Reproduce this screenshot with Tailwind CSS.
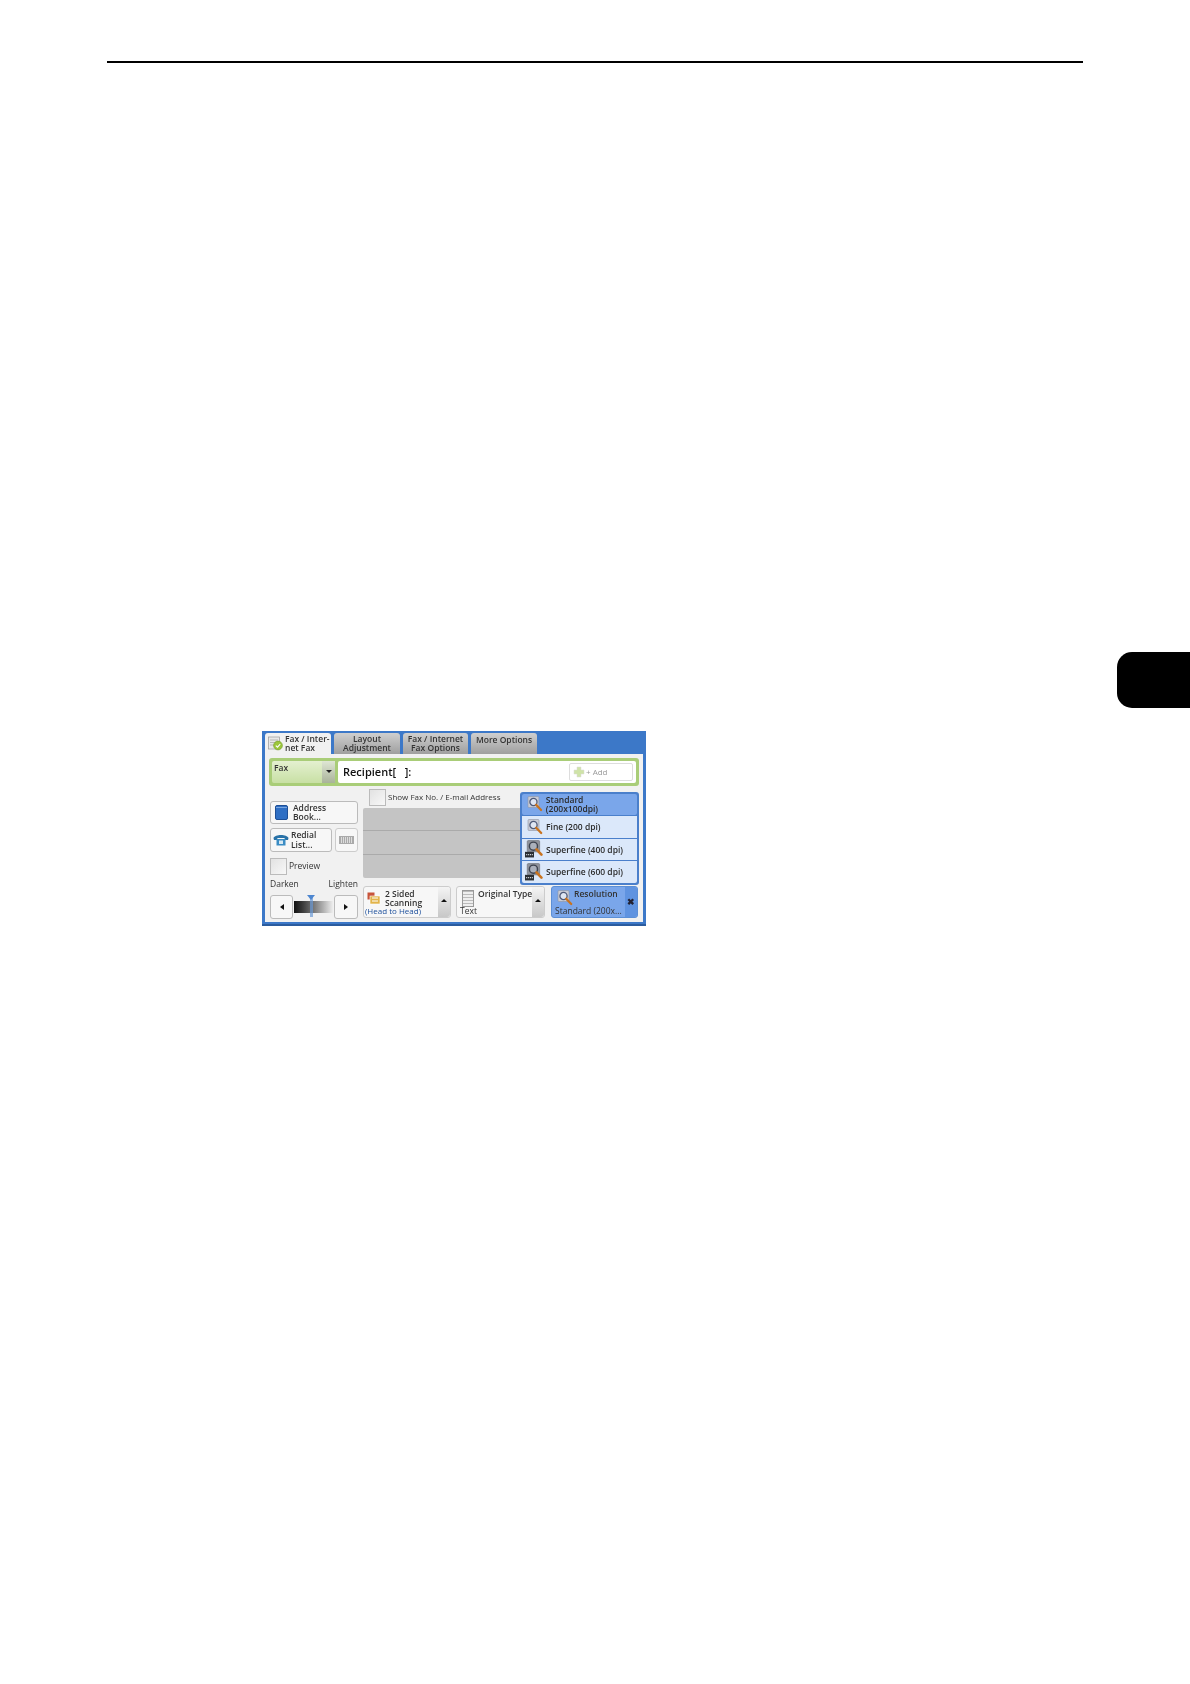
<!DOCTYPE html>
<html lang="en">
<head>
  <meta charset="UTF-8" />
  <title>Fax / Internet Fax</title>
  <script src="https://cdn.jsdelivr.net/npm/@tailwindcss/browser@4"></script>
</head>
<body class="bg-white h-[1684px] relative overflow-hidden font-['Open_Sans',sans-serif]">
  <svg class="hidden">
    <symbol id="lens" viewBox="0 0 16 16">
      <rect x="1" y="0.5" width="11" height="11" rx="1" fill="#c9ccd6" stroke="#8d93a3" stroke-width="0.6" />
      <circle cx="6.5" cy="6" r="3.6" fill="#dfe6f2" stroke="#4f5a78" stroke-width="1.3" />
      <path d="M9.2 8.8 L14.2 14" stroke="#c9731f" stroke-width="2.3" stroke-linecap="round" />
    </symbol>
    <symbol id="lensDark" viewBox="0 0 16 16">
      <rect x="2" y="0.5" width="11" height="10" rx="1" fill="#8f939c" stroke="#6d717a" stroke-width="0.6" />
      <circle cx="7.5" cy="5.5" r="3.6" fill="#aab0bb" stroke="#3e4450" stroke-width="1.3" />
      <path d="M10.2 8.3 L14.6 13" stroke="#c9731f" stroke-width="2.3" stroke-linecap="round" />
      <rect x="0" y="10.5" width="8" height="5" fill="#2b2f33" />
      <path d="M1 13h6" stroke="#cfd2d6" stroke-width="1" stroke-dasharray="1 .7" />
    </symbol>
  </svg>

  <div class="mt-[61px] mx-[107px] h-[1.5px] bg-black"></div>

  <!-- chapter tab -->
  <div class="absolute left-[1117px] top-[652px] w-[73px] h-[56px] bg-black rounded-l-[15px]"></div>

  <div class="mt-[668px] ml-[262px] w-[384px] h-[195px] bg-[#3c78c8] border-b-2 border-[#2b5c9e] pt-[2px] px-[3px] blur-[0.35px] text-[#333] leading-[9.5px]">
    <!-- tabs -->
    <div class="flex h-[21px] gap-[3px] text-[8.5px] font-semibold">
      <div class="w-[66px] bg-[#f1f1f1] rounded-t-[3px] flex items-center gap-[2px] pl-[3px]">
        <svg class="w-[15px] h-[15px] shrink-0" viewBox="0 0 15 15">
          <rect x="0.5" y="1" width="11" height="12" fill="#e8e8e8" stroke="#999" stroke-width="0.7" />
          <path d="M2 4h8M2 6.5h6M2 9h5" stroke="#aaa" stroke-width="0.8" />
          <circle cx="10" cy="9.5" r="4.4" fill="#9cc63b" stroke="#6f9a22" stroke-width="0.6" />
          <path d="M7.8 9.6l1.7 1.6 2.7-3" fill="none" stroke="#fff" stroke-width="1.1" />
        </svg>
        <div>Fax / Inter-<br />net Fax</div>
      </div>
      <div class="w-[66px] bg-gradient-to-b from-[#cfcfcf] to-[#9f9f9f] rounded-t-[3px] flex items-center justify-center text-center">Layout<br />Adjustment</div>
      <div class="w-[65px] bg-gradient-to-b from-[#cfcfcf] to-[#9f9f9f] rounded-t-[3px] flex items-center justify-center text-center">Fax / Internet<br />Fax Options</div>
      <div class="w-[66px] bg-gradient-to-b from-[#cfcfcf] to-[#9f9f9f] rounded-t-[3px] text-center pt-[2px]">More Options</div>
    </div>

    <!-- body -->
    <div class="relative w-[378px] h-[168px] bg-[#f1f1f1] pt-[4px]">
      <div class="mx-[4px] h-[28px] bg-[#a9cd78] rounded-[3px] p-[3px] flex">
        <div class="w-[50px] bg-gradient-to-b from-[#e4f0d0] to-[#c8e0a4] rounded-l-[2px] pl-[2px] pt-[2px] text-[8.5px] font-semibold">Fax</div>
        <div class="w-[13px] bg-gradient-to-b from-[#dfe6d4] to-[#a9b39a] flex items-center justify-center">
          <div class="w-0 h-0 border-x-[3px] border-x-transparent border-t-[3px] border-t-[#222]"></div>
        </div>
        <div class="ml-[3px] flex-1 bg-white rounded-[2px] flex items-center justify-between pl-[5px] pr-[3px]">
          <span class="text-[11px] font-semibold text-[#111]">Recipient[&nbsp;&nbsp;&nbsp;]:</span>
          <div class="w-[64px] h-[18px] border border-[#ddd] rounded-[2px] flex items-center pl-[3px] gap-[1px] text-[8px] text-[#999]">
            <svg class="w-[12px] h-[12px]" viewBox="0 0 12 12"><path d="M4 1h4v3h3v4H8v3H4V8H1V4h3z" fill="#cfe3a8" stroke="#dbdbdb" stroke-width="0.5" /></svg>
            + Add
          </div>
        </div>
      </div>

      <div class="flex">
        <!-- left column -->
        <div class="w-[88px] ml-[5px] pt-[15px] flex flex-col shrink-0 text-[8.5px] font-semibold">
          <div class="h-[23px] border border-[#bbb] rounded-[3px] bg-[#f7f7f7] flex items-center pl-[4px] gap-[5px]">
            <svg class="w-[13px] h-[15px] shrink-0" viewBox="0 0 13 15"><rect x="0.5" y="0.5" width="12" height="14" rx="1.5" fill="#2f6fc4" stroke="#1e4f96" /><path d="M1 2.5h11" stroke="#7ba6e0" /></svg>
            <div>Address<br />Book...</div>
          </div>
          <div class="mt-[4px] flex gap-[3px] h-[24px]">
            <div class="w-[62px] border border-[#bbb] rounded-[3px] bg-[#f7f7f7] flex items-center pl-[2px] gap-[2px]">
              <svg class="w-[16px] h-[13px] shrink-0" viewBox="0 0 16 13"><path d="M0.5 5C2 1 14 1 15.5 5l-.5 2h-3l-.5-2h-7L4 7H1z" fill="#2a73a8" /><rect x="3.5" y="6" width="9" height="6.5" fill="#3a8cc4" /><rect x="6" y="7.5" width="4" height="3.5" fill="#d7e8f2" /></svg>
              <div>Redial<br />List...</div>
            </div>
            <div class="w-[23px] border border-[#ccc] rounded-[3px] bg-[#f7f7f7] flex items-center justify-center">
              <div class="w-[15px] h-[8px] bg-[repeating-linear-gradient(90deg,#aaa_0,#aaa_1px,#ddd_1px,#ddd_2px)] border border-[#aaa]"></div>
            </div>
          </div>
          <div class="mt-[6px] h-[17px] flex items-center gap-[2px] font-normal">
            <div class="w-[17px] h-[17px] border border-[#bbb] bg-gradient-to-br from-[#e2e2e2] to-[#f8f8f8]"></div>
            <span>Preview</span>
          </div>
          <div class="mt-[4px] h-[15px] flex justify-between font-normal"><span>Darken</span><span>Lighten</span></div>
          <div class="mt-[1px] flex h-[24px] items-stretch">
            <div class="w-[23px] border border-[#bbb] rounded-[3px] bg-[#f7f7f7] flex items-center justify-center">
              <div class="w-0 h-0 border-y-[3px] border-y-transparent border-r-[4px] border-r-[#111]"></div>
            </div>
            <div class="flex-1 relative flex items-center pl-[1px]">
              <div class="w-[39px] h-[12px] bg-gradient-to-r from-[#111] via-[#777] to-[#eee]"></div>
              <div class="absolute left-[17px] top-[2px] w-[3px] h-[20px] bg-[#6b9ad6]/70"></div>
              <div class="absolute left-[14px] top-[0px] w-0 h-0 border-x-[4px] border-x-transparent border-t-[5px] border-t-[#4d86d0]"></div>
            </div>
            <div class="w-[24px] border border-[#bbb] rounded-[3px] bg-[#f7f7f7] flex items-center justify-center">
              <div class="w-0 h-0 border-y-[3px] border-y-transparent border-l-[4px] border-l-[#111]"></div>
            </div>
          </div>
        </div>

        <!-- middle column -->
        <div class="ml-[5px] w-[276px]">
          <div class="mt-[3px] ml-[6px] h-[17px] flex items-center gap-[2px] text-[8px]">
            <div class="w-[17px] h-[17px] border border-[#bbb] bg-gradient-to-br from-[#e2e2e2] to-[#f8f8f8]"></div>
            <span>Show Fax No. / E-mail Address</span>
          </div>
          <div class="mt-[2px] w-[170px] h-[70px] bg-[#c4c4c4] rounded-[2px] flex flex-col gap-px">
            <div class="flex-1 border-b border-[#aaa]"></div>
            <div class="flex-1 border-b border-[#aaa]"></div>
            <div class="flex-1"></div>
          </div>
          <div class="mt-[8px] flex h-[32px] text-[8.5px] font-semibold">
            <div class="relative w-[88px] border border-[#ccc] rounded-[3px] bg-[#f7f7f7] flex">
              <div class="flex-1 relative">
                <svg class="absolute left-[3px] top-[5px] w-[14px] h-[13px]" viewBox="0 0 14 13"><rect x="0.5" y="0.5" width="7" height="7" fill="#c8543a" /><rect x="3" y="4" width="10" height="8" fill="#e2b44a" stroke="#fff" stroke-width="0.6" /><path d="M5 6h6M5 9h6" stroke="#fff" /></svg>
                <div class="absolute left-[21px] top-[2px]">2 Sided<br />Scanning</div>
                <div class="absolute left-[1px] bottom-[1px] text-[#1c4f9c] font-normal text-[8px] whitespace-nowrap">(Head to Head)</div>
              </div>
              <div class="w-[12px] bg-gradient-to-b from-[#f4f4f4] to-[#c8c8c8] rounded-r-[3px] flex justify-center pt-[12px]">
                <div class="w-0 h-0 border-x-[3px] border-x-transparent border-b-[3px] border-b-[#111]"></div>
              </div>
            </div>
            <div class="relative ml-[5px] w-[89px] border border-[#ccc] rounded-[3px] bg-[#f7f7f7] flex">
              <div class="flex-1 relative">
                <div class="absolute left-[5px] top-[3px] w-[12px] h-[17px] border border-[#999] bg-[repeating-linear-gradient(180deg,#bbb_0,#bbb_1px,#eee_1px,#eee_3px)]"></div>
                <div class="absolute left-[21px] top-[2px] whitespace-nowrap">Original Type</div>
                <div class="absolute left-[3px] bottom-[1px] font-normal">Text</div>
              </div>
              <div class="w-[12px] bg-gradient-to-b from-[#f4f4f4] to-[#c8c8c8] rounded-r-[3px] flex justify-center pt-[12px]">
                <div class="w-0 h-0 border-x-[3px] border-x-transparent border-b-[3px] border-b-[#111]"></div>
              </div>
            </div>
            <div class="relative ml-[6px] w-[87px] border border-[#5b8fd6] rounded-[3px] bg-[#7aa6ea] flex">
              <div class="flex-1 relative">
                <svg class="absolute left-[5px] top-[3px] w-[16px] h-[16px]"><use href="#lens" /></svg>
                <div class="absolute left-[22px] top-[2px]">Resolution</div>
                <div class="absolute left-[3px] bottom-[1px] font-normal whitespace-nowrap">Standard (200x...</div>
              </div>
              <div class="w-[12px] bg-[#5f93e0] rounded-r-[3px] flex items-center justify-center text-[9px] font-bold text-[#223]">✖</div>
            </div>
          </div>
        </div>
      </div>

      <!-- resolution popup -->
      <div class="absolute left-[255px] top-[38px] w-[119px] h-[93px] bg-[#4a7fcb] rounded-[3px] p-[2px] flex flex-col gap-[1px] text-[8.5px] font-semibold text-[#2b2b2b]">
        <div class="flex-1 bg-[#7aa6ea] rounded-[2px] flex items-center pl-[5px] gap-[3px]">
          <svg class="w-[16px] h-[16px]"><use href="#lens" /></svg>
          <span>Standard (200x100dpi)</span>
        </div>
        <div class="flex-1 bg-[#dbe8fa] flex items-center pl-[5px] gap-[3px]">
          <svg class="w-[16px] h-[16px]"><use href="#lens" /></svg>
          <span>Fine (200 dpi)</span>
        </div>
        <div class="flex-1 bg-[#dbe8fa] flex items-center pl-[3px] gap-[3px]">
          <svg class="w-[18px] h-[18px]"><use href="#lensDark" /></svg>
          <span>Superfine (400 dpi)</span>
        </div>
        <div class="flex-1 bg-[#dbe8fa] rounded-b-[2px] flex items-center pl-[3px] gap-[3px]">
          <svg class="w-[18px] h-[18px]"><use href="#lensDark" /></svg>
          <span>Superfine (600 dpi)</span>
        </div>
      </div>
    </div>
  </div>
</body>
</html>
